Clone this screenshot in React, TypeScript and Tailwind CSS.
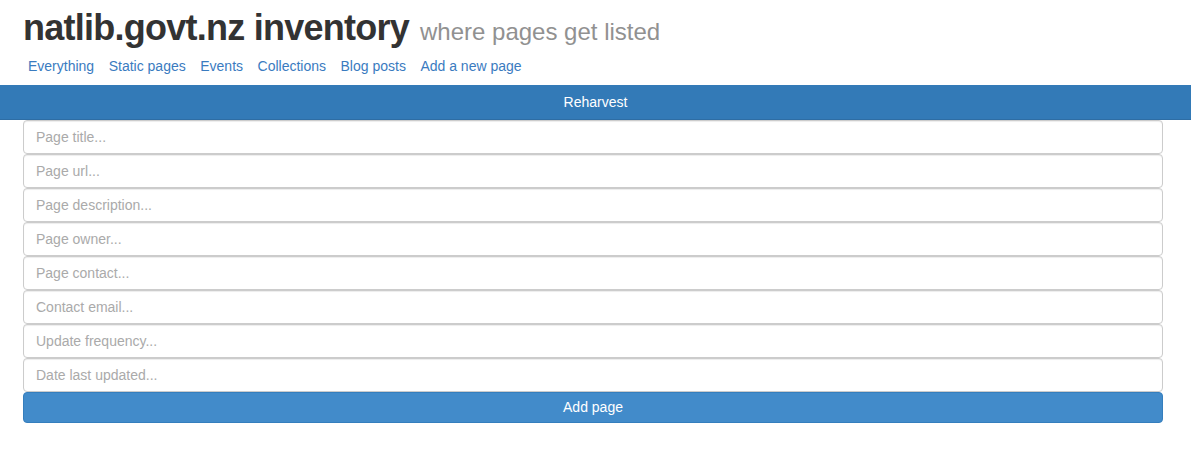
const NAV_LINKS = ["Everything", "Static pages", "Events", "Collections", "Blog posts", "Add a new page"];

const FIELDS = [
  "Page title...",
  "Page url...",
  "Page description...",
  "Page owner...",
  "Page contact...",
  "Contact email...",
  "Update frequency...",
  "Date last updated...",
];

const App = () => {
  return (
    <div className="min-h-screen bg-white font-['Liberation_Sans',Arial,sans-serif] text-[#333]">
      {/* Header */}
      <div className="ml-[23px] w-[1140px] pt-[8px]">
        <h1 className="flex items-baseline text-[36px] leading-[40px] font-bold tracking-[-0.75px] text-[#333]">
          natlib.govt.nz inventory
          <small className="ml-[11px] text-[24px] font-normal tracking-normal text-[#919191]">
            where pages get listed
          </small>
        </h1>
        <nav className="mt-[4px] mb-[9px] flex h-[20px] items-center gap-[4.5px] text-[14px] leading-[20px]">
          {NAV_LINKS.map((link) => (
            <a key={link} href="#" className="px-[5px] text-[#3a7bbf] hover:underline">
              {link}
            </a>
          ))}
        </nav>
      </div>

      {/* Reharvest bar */}
      <button className="flex h-[35px] w-full items-center justify-center border-b border-[#2e6da4] bg-[#337ab7] text-[14px] text-white">
        Reharvest
      </button>

      {/* Add page form */}
      <form className="ml-[23px] flex w-[1140px] flex-col" onSubmit={(e) => e.preventDefault()}>
        {FIELDS.map((field) => (
          <input
            key={field}
            type="text"
            placeholder={field}
            className="h-[34px] w-full rounded-[4px] border border-[#ccc] bg-white px-[12px] text-[14px] text-[#555] shadow-[inset_0_1px_1px_rgba(0,0,0,0.075)] outline-none placeholder:text-[#aaa]"
          />
        ))}
        <button
          type="submit"
          className="flex h-[31px] w-full items-center justify-center rounded-[4px] border border-[#357ebd] bg-[#428bca] text-[14px] text-white"
        >
          Add page
        </button>
      </form>
    </div>
  );
};

export default App;
